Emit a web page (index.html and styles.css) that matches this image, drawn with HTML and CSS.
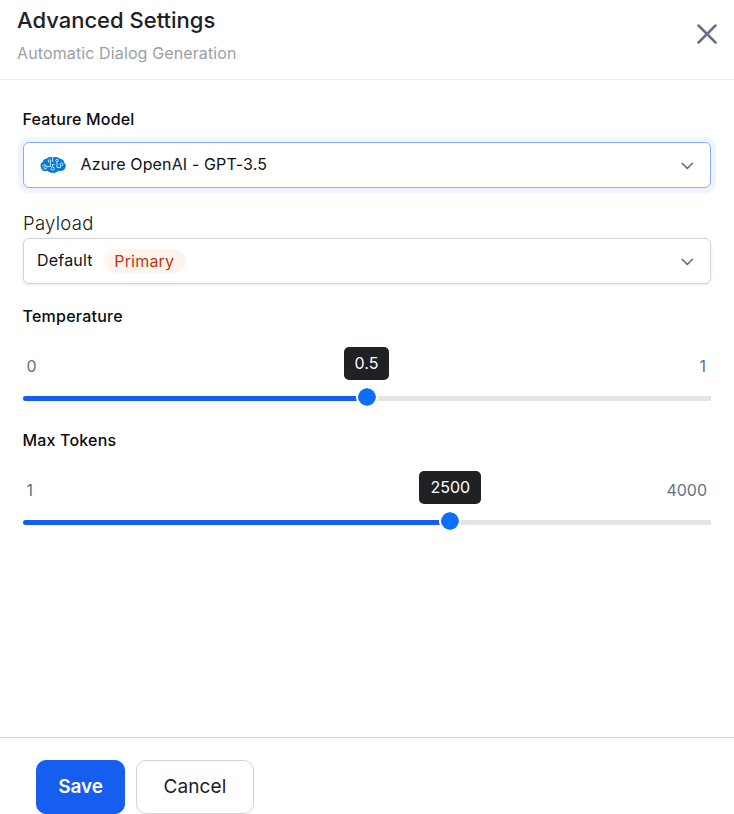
FILE: index.html
```html
<!DOCTYPE html>
<html lang="en">
<head>
<meta charset="utf-8">
<title>Advanced Settings</title>
<link rel="stylesheet" href="styles.css">
</head>
<body>
<div class="panel">
  <header class="header">
    <div>
      <h1 class="title"><span>Advanced Settings</span></h1>
      <p class="subtitle"><span>Automatic Dialog Generation</span></p>
    </div>
    <svg class="close" viewBox="0 0 20 20"><path d="M1.500 1.500 18.500 18.500M18.500 1.500 1.500 18.500"/></svg>
  </header>
  <main class="content">
    <div class="label"><span>Feature Model</span></div>
    <div class="select focused">
      <svg class="brain" viewBox="0 0 26 18">
        <path class="brain-fill" d="M7 2.500C9 .8 11 .7 12.700 1.500C15 .5 18 .8 19.500 2.600C22.500 2.800 24.200 4.500 24 6.600C26 8 26.400 11.500 24.500 13C23.500 15 20.500 15.400 18.500 14.700C17 16.500 14.500 17.300 12.500 16.700C10.500 17 8.500 16.300 7.500 14.800C4.500 16 1.200 14.500 1.200 12C-.3 9.500 .8 6.700 2.800 6C3 4 5 2.500 7 2.500Z"/>
        <path class="brain-line" d="M2.500 9.500C4 8.200 6 8.500 7 10.500M7 10.500H10.500V6.500M12.500 2V6M12.500 10.500V8.500H14.500M17 5.500V11.500H20.500V9.500"/>
        <circle class="brain-line" cx="5.200" cy="11.500" r="1.500"/><circle class="brain-line" cx="9.500" cy="5" r="1.300"/><circle class="brain-line" cx="12.700" cy="12.500" r="1.600"/><circle class="brain-line" cx="17" cy="4.500" r="1.200"/><circle class="brain-line" cx="21.500" cy="8.300" r="1.400"/>
      </svg>
      <span class="model">Azure OpenAI - GPT-3.5</span>
      <svg class="chevron" viewBox="0 0 14 8"><path d="M2.300 1.500 7.300 6.500 12.300 1.500"/></svg>
    </div>
    <div class="payload"><span>Payload</span></div>
    <div class="select">
      <span class="default">Default</span>
      <span class="badge"><span>Primary</span></span>
      <svg class="chevron" viewBox="0 0 14 8"><path d="M2.300 1.500 7.300 6.500 12.300 1.500"/></svg>
    </div>
    <section class="range temperature">
      <div class="label"><span>Temperature</span></div>
      <div class="limits"><span>0</span><span>1</span></div>
      <div class="track"><div class="fill"></div><div class="thumb"></div><div class="tooltip"><span>0.5</span></div></div>
    </section>
    <section class="range tokens">
      <div class="label"><span>Max Tokens</span></div>
      <div class="limits"><span>1</span><span>4000</span></div>
      <div class="track"><div class="fill"></div><div class="thumb"></div><div class="tooltip"><span>2500</span></div></div>
    </section>
  </main>
  <footer class="footer">
    <button class="button save"><span>Save</span></button>
    <button class="button cancel"><span>Cancel</span></button>
  </footer>
</div>
</body>
</html>
```
FILE: styles.css
```css
* { box-sizing: border-box; }
body { margin: 0; background: #fff; color: #202124; font-family: Inter, sans-serif; font-size: 16px; }
.panel { display: flex; flex-direction: column; height: 814px; overflow: hidden; }
.header { display: flex; justify-content: space-between; height: 80px; padding: 6px 17px 0; border-bottom: 1px solid #ededee; }
.title { margin: 0; font-size: 22px; line-height: 28px; font-weight: 500; }
.subtitle { margin: 9px 0 0; line-height: 20px; color: #9b9fa5; letter-spacing: .12px; }
.close { width: 20px; height: 20px; margin-top: 18px; fill: none; stroke: #667085; stroke-width: 2.5; stroke-linecap: round; }
.content { flex: 1; padding: 29px 23px 0; }
.label { height: 20px; line-height: 20px; font-weight: 500; color: #0c0d0f; letter-spacing: .18px; margin-left: -.5px; }
.temperature .label { letter-spacing: .25px; }
.select { display: flex; align-items: center; height: 46px; padding: 0 16px 0 13px; background: #fff; border: 1px solid #d3d4d6; border-radius: 6px; box-shadow: 0 1px 3px rgba(16, 24, 40, .1); }
.focused { margin-top: 13px; border-color: #84adff; box-shadow: 0 0 0 5px #eff4ff; }
.brain { width: 26px; height: 18px; margin: 0 14.500px 0 3px; }
.brain-fill { fill: #0879d5; }
.brain-line { fill: none; stroke: #d4eaff; stroke-width: .9; }
.chevron { width: 14px; height: 8px; margin: 2px 0 0 auto; fill: none; stroke: #5d6b82; stroke-width: 1.7; stroke-linecap: round; stroke-linejoin: round; }
.payload { height: 24px; margin: 23px 0 3px; font-size: 18.500px; line-height: 24px; font-weight: 350; letter-spacing: .3px; }
.model, .default { margin-top: -2px; color: #101214; }
.model { letter-spacing: .14px; }
.default { letter-spacing: .2px; }
.badge { width: 82px; height: 24px; margin-left: 11px; padding-right: 1px; border-radius: 12px; background: #fff4ed; color: #b93815; line-height: 24px; text-align: center; letter-spacing: .2px; }
.range { height: 124px; padding-top: 22px; }
.limits { display: flex; justify-content: space-between; height: 20px; margin-top: 30px; padding: 0 4px 0 3.500px; color: #667085; line-height: 20px; }
.temperature .limits { padding-right: 5px; }
.track { position: relative; height: 5px; margin-top: 20px; background: #e3e4e5; border-radius: 3px 1px 1px 3px; }
.fill { width: 50%; height: 5px; background: #155eef; border-radius: 3px 0 0 3px; }
.thumb { position: absolute; left: 50%; top: -10px; width: 22px; height: 22px; margin-left: -11px; border: 2px solid #fff; border-radius: 50%; background: #0d6efd; background-clip: padding-box; }
.tooltip { position: absolute; left: 50%; bottom: 21px; width: 45px; height: 33px; margin-left: -23px; border-radius: 5px; background: #202124; color: #fff; line-height: 33px; text-align: center; }
.tokens .fill { width: 62.1%; }
.tokens .thumb { left: 62.1%; }
.tokens .tooltip { left: 62.1%; width: 62px; margin-left: -31px; }
.footer { display: flex; gap: 11px; height: 77px; padding: 22px 36px 0; border-top: 1px solid #d0d3db; }
.button { height: 54px; padding: 0; border: 1px solid #d0d5dd; border-radius: 10px; font: 500 19px/52px Inter, sans-serif; }
.save { width: 89px; border-color: #155eef; background: #155eef; color: #fff; font-weight: 600; letter-spacing: -.1px; }
.cancel { width: 118px; background: #fff; color: #202124; font-weight: 400; letter-spacing: .1px; }
```
